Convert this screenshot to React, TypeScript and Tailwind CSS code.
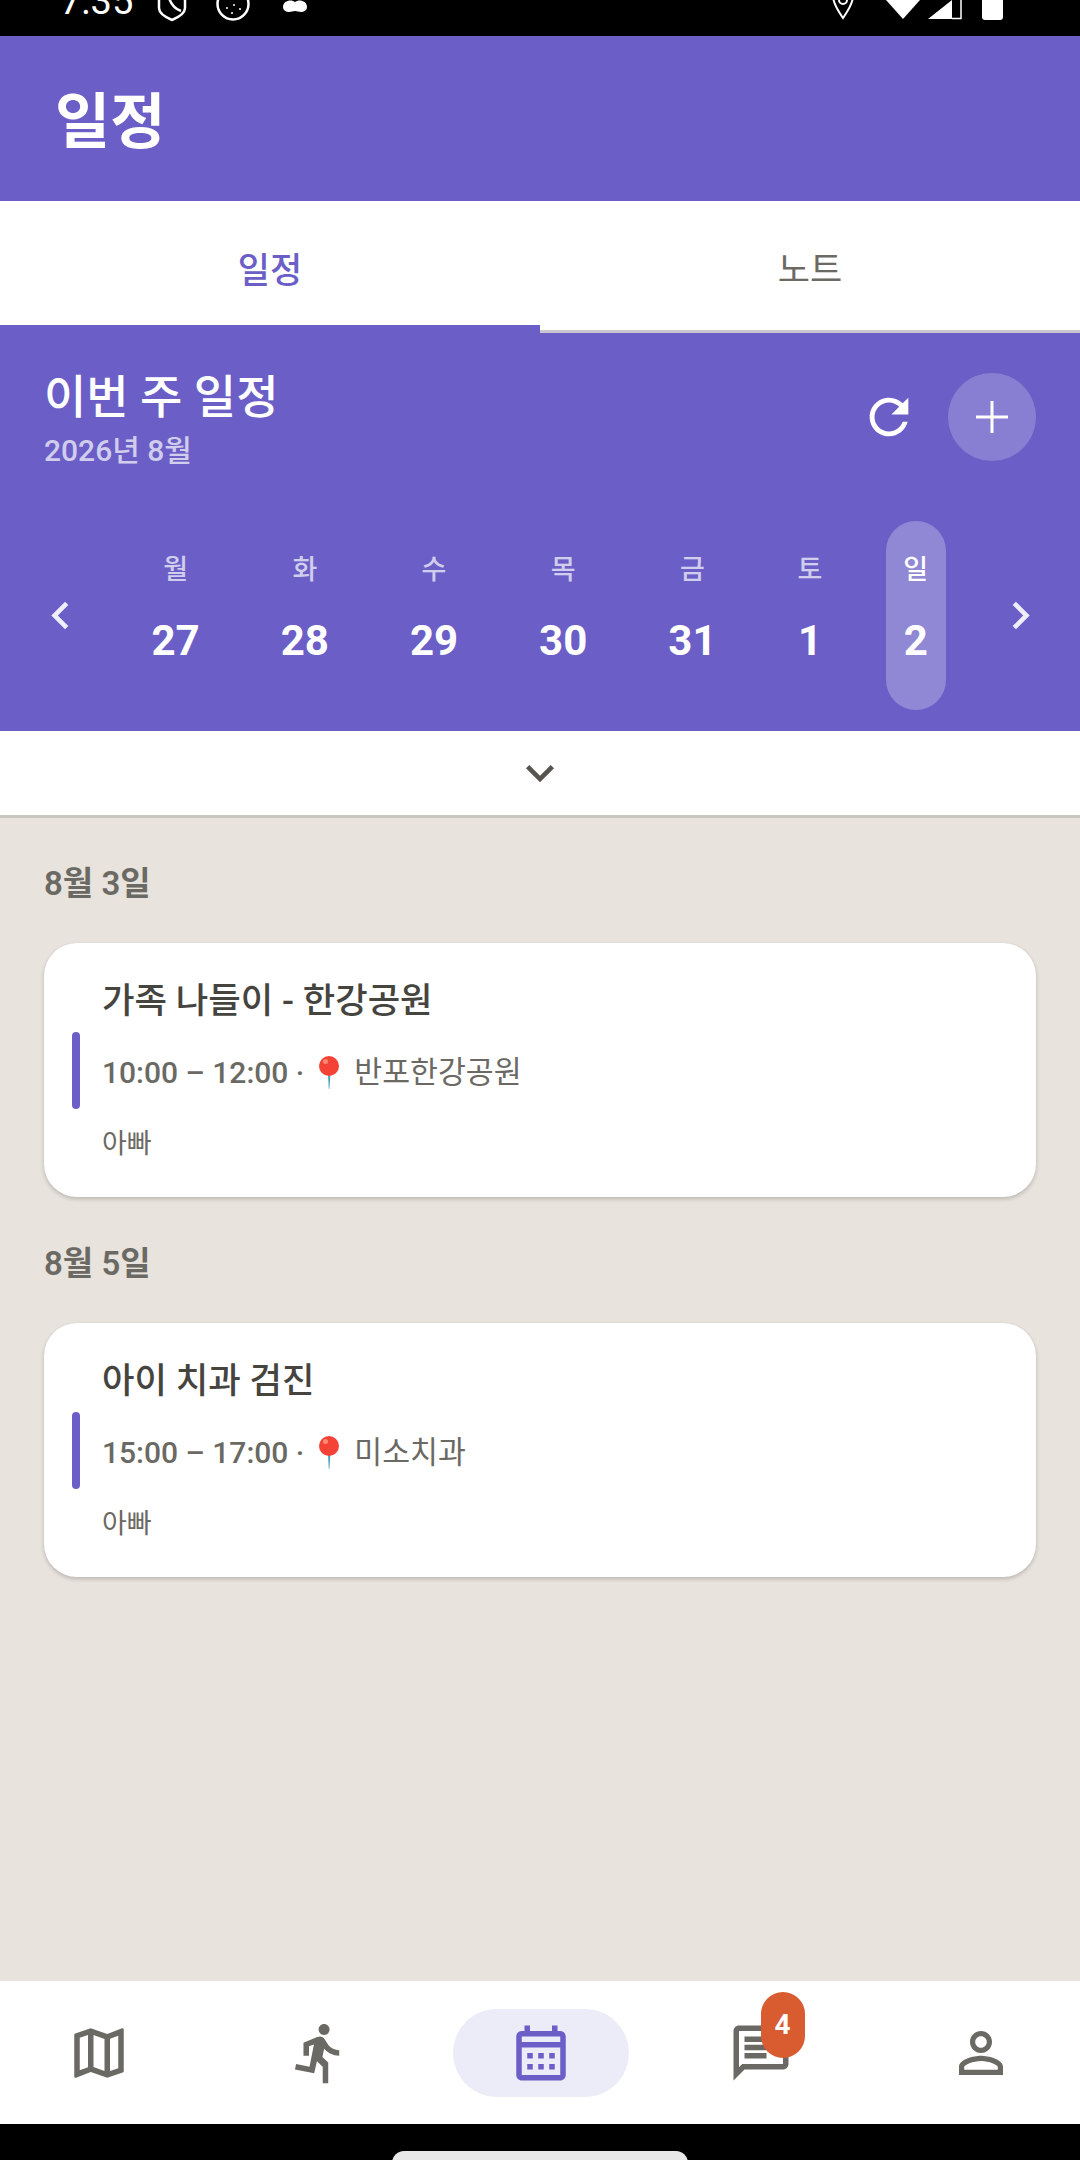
const fontStack = { fontFamily: '"Roboto", "Noto Sans CJK KR", sans-serif' };

const days = [
  { name: "월", num: "27" },
  { name: "화", num: "28" },
  { name: "수", num: "29" },
  { name: "목", num: "30" },
  { name: "금", num: "31" },
  { name: "토", num: "1" },
  { name: "일", num: "2", active: true },
];

const events = [
  { date: "8월 3일", title: "가족 나들이 - 한강공원", time: "10:00 – 12:00 ·", place: "반포한강공원", who: "아빠" },
  { date: "8월 5일", title: "아이 치과 검진", time: "15:00 – 17:00 ·", place: "미소치과", who: "아빠" },
];

function Icon({ d, className }: { d: string; className: string }) {
  return (
    <svg viewBox="0 0 24 24" fill="currentColor" className={className}>
      <path d={d} />
    </svg>
  );
}

const paths = {
  refresh:
    "M17.65 6.35C16.2 4.9 14.21 4 12 4c-4.42 0-7.99 3.58-7.99 8s3.57 8 7.99 8c3.73 0 6.84-2.55 7.73-6h-2.08c-.82 2.33-3.04 4-5.65 4-3.31 0-6-2.69-6-6s2.69-6 6-6c1.66 0 3.14.69 4.22 1.78L13 11h7V4l-2.35 2.35z",
  left: "M15.41 7.41L14 6l-6 6 6 6 1.41-1.41L10.83 12z",
  right: "M8.59 16.59L10 18l6-6-6-6-1.41 1.41L13.17 12z",
  down: "M16.59 8.59L12 13.17 7.41 8.59 6 10l6 6 6-6z",
  map: "M20.5 3l-.16.03L15 5.1 9 3 3.36 4.9c-.21.07-.36.25-.36.48V20.5c0 .28.22.5.5.5l.16-.03L9 18.9l6 2.1 5.64-1.9c.21-.07.36-.25.36-.48V3.5c0-.28-.22-.5-.5-.5zM10 5.47l4 1.4v11.66l-4-1.4V5.47zm-5 .99l3-1.01v11.7l-3 1.16V6.46zm14 11.08l-3 1.01V6.86l3-1.16v11.84z",
  run: "M13.49 5.48c1.1 0 2-.9 2-2s-.9-2-2-2-2 .9-2 2 .9 2 2 2zm-3.6 13.9l1-4.4 2.1 2v6h2v-7.5l-2.1-2 .6-3c1.3 1.5 3.3 2.5 5.5 2.5v-2c-1.9 0-3.5-1-4.3-2.4l-1-1.6c-.4-.6-1-1-1.7-1-.3 0-.5.1-.8.1l-5.2 2.2v4.7h2v-3.4l1.8-.7-1.6 8.1-4.9-1-.4 2 7 1.4z",
  calendar:
    "M19 4h-1V2h-2v2H8V2H6v2H5c-1.1 0-2 .9-2 2v14c0 1.1.9 2 2 2h14c1.1 0 2-.9 2-2V6c0-1.1-.9-2-2-2zm0 16H5V10h14v10zm0-12H5V6h14v2zM9 14H7v-2h2v2zm4 0h-2v-2h2v2zm4 0h-2v-2h2v2zm-8 4H7v-2h2v2zm4 0h-2v-2h2v2zm4 0h-2v-2h2v2z",
  chat: "M20 2H4c-1.1 0-2 .9-2 2v18l4-4h14c1.1 0 2-.9 2-2V4c0-1.1-.9-2-2-2zm0 14H5.17L4 17.17V4h16v12zM6 12h8v2H6zm0-3h12v2H6zm0-3h12v2H6z",
  person:
    "M12 5.9c1.16 0 2.1.94 2.1 2.1s-.94 2.1-2.1 2.1S9.9 9.16 9.9 8s.94-2.1 2.1-2.1m0 9c2.97 0 6.1 1.46 6.1 2.1v1.1H5.9V17c0-.64 3.13-2.1 6.1-2.1M12 4C9.79 4 8 5.79 8 8s1.79 4 4 4 4-1.79 4-4-1.79-4-4-4zm0 9c-2.67 0-8 1.34-8 4v3h16v-3c0-2.66-5.33-4-8-4z",
};

function StatusBar() {
  return (
    <div className="h-[36px] shrink-0 bg-black overflow-hidden flex items-start text-white pl-[60px] pr-[77px]">
      <span className="text-[38px] leading-[38px] -mt-[18px] w-[97px] font-normal">7:35</span>
      <svg width="30" height="22" viewBox="0 0 30 22" fill="none" stroke="white" strokeWidth="2.5">
        <path d="M2 -8V8c0 5 6 9 13 12 7-3 13-7 13-12V-8M12 -2c2 6 6 11 12 13" />
      </svg>
      <svg width="34" height="22" viewBox="0 0 34 22" className="ml-[29px]">
        <circle cx="17" cy="4" r="15.5" fill="none" stroke="white" strokeWidth="2.5" />
        <circle cx="11" cy="8" r="1" fill="white" />
        <circle cx="18" cy="5" r="1" fill="white" />
        <circle cx="24" cy="9" r="1" fill="white" />
        <circle cx="16" cy="13" r="1" fill="white" />
      </svg>
      <svg width="24" height="13" viewBox="0 0 24 13" fill="white" className="ml-[33px]">
        <path d="M12 2C15-1 24 0 24 7c0 4-4 5-6 5-2 0-4-1-6-1s-4 1-6 1c-2 0-6-1-6-5C0 0 9-1 12 2z" />
      </svg>
      <svg width="24" height="20" viewBox="0 0 24 20" fill="none" stroke="white" strokeWidth="2" className="ml-auto">
        <path d="M2 -4c0 8 6 16 10 22C16 12 22 4 22 -4M8 0a4 4 0 0 0 8 0" />
      </svg>
      <svg width="34" height="19" viewBox="0 0 34 19" fill="white" className="ml-[31px]">
        <path d="M0 0H34L17 19z" />
      </svg>
      <svg width="34" height="20" viewBox="0 0 34 20" className="ml-[8px]">
        <path d="M0 19L24 0V19z" fill="white" />
        <path d="M24 18.5H33V0" fill="none" stroke="white" strokeWidth="1.5" />
      </svg>
      <div className="w-[21px] h-[20px] ml-[20px] bg-white rounded-b-[3px]" />
    </div>
  );
}

function DayColumn({ name, num, active }: { name: string; num: string; active?: boolean }) {
  return (
    <div
      className={`mx-[23px] px-[17.5px] h-[189px] rounded-[30px] flex flex-col items-center pt-[31px] ${
        active ? "bg-white/25" : ""
      }`}
    >
      <span className={`text-[27px] leading-[36px] font-medium ${active ? "text-white" : "text-white/70"}`}>{name}</span>
      <span className="text-[42px] leading-[50px] font-bold text-white mt-[28px]">{num}</span>
    </div>
  );
}

function PinEmoji() {
  return (
    <svg width="22" height="33" viewBox="0 0 22 33" className="ml-[14px] mr-[14px] shrink-0">
      <path d="M10 18h2.4L11.4 33h-.6z" fill="#4a9fb5" />
      <circle cx="11" cy="10" r="10" fill="#f44336" />
      <circle cx="7.5" cy="5.5" r="2.5" fill="#ff8a75" />
    </svg>
  );
}

function EventCard({ title, time, place, who }: { title: string; time: string; place: string; who: string }) {
  return (
    <div className="mt-[35px] h-[254px] rounded-[33px] bg-white shadow-[0_2px_4px_rgba(0,0,0,0.2)] flex items-center pl-[28px]">
      <div className="w-[8px] h-[77px] rounded-full bg-[#6b5fc7] shrink-0" />
      <div className="ml-[22px] flex flex-col">
        <div className="text-[35.3px] leading-[50px] font-medium text-[#45443f] -mt-[3px]">{title}</div>
        <div className="mt-[22px] flex items-center h-[50px] text-[#6b6963]">
          <span className="text-[30px] font-medium">{time}</span>
          <PinEmoji />
          <span className="text-[30.3px]">{place}</span>
        </div>
        <div className="mt-[28px] text-[27px] leading-[36px] text-[#6b6963]">{who}</div>
      </div>
    </div>
  );
}

function BottomNav() {
  return (
    <div className="h-[143px] shrink-0 bg-white flex items-center justify-between px-[66px] text-[#6b6963]">
      <Icon d={paths.map} className="w-[66px] h-[66px]" />
      <Icon d={paths.run} className="w-[66px] h-[66px]" />
      <div className="w-[66px] flex justify-center">
        <div className="-mx-[55px] ml-[-54px] w-[176px] h-[88px] shrink-0 rounded-full bg-[#ecebf8] flex items-center justify-center text-[#6b5fc7]">
          <Icon d={paths.calendar} className="w-[66px] h-[66px]" />
        </div>
      </div>
      <div className="relative w-[66px] h-[66px]">
        <Icon d={paths.chat} className="w-[66px] h-[66px]" />
        <div className="absolute left-[33px] -top-[28px] w-[44px] h-[66px] rounded-full bg-[#d95b30] text-white text-[28px] font-bold flex items-center justify-center">
          4
        </div>
      </div>
      <Icon d={paths.person} className="w-[66px] h-[66px]" />
    </div>
  );
}

export default function App() {
  return (
    <div className="w-[1080px] h-[2160px] flex flex-col bg-[#e8e3dc] overflow-hidden" style={fontStack}>
      <StatusBar />

      <div className="h-[165px] shrink-0 bg-[#6b5fc7] flex items-center pl-[55px] pt-[8px] text-[60px] font-bold text-white">일정</div>

      <div className="h-[132px] shrink-0 flex bg-white">
        <div className="flex-1 border-b-[8px] border-[#6b5fc7] flex items-center justify-center text-[35px] font-medium text-[#6b5fc7] pt-[18px]">
          일정
        </div>
        <div className="flex-1 border-b-[3px] border-[#c9c6cf] flex items-center justify-center text-[35px] text-[#6b6963] pt-[12px]">
          노트
        </div>
      </div>

      <div className="h-[398px] shrink-0 bg-[#6b5fc7] flex flex-col">
        <div className="flex items-start justify-between pl-[44px] pr-[44px] pt-[40px]">
          <div className="flex flex-col">
            <div className="text-[46px] leading-[60px] font-medium text-white -mt-[6px]">이번 주 일정</div>
            <div className="text-[30px] leading-[40px] font-medium text-white/70 mt-[4px]">2026년 8월</div>
          </div>
          <div className="flex items-center">
            <Icon d={paths.refresh} className="w-[58px] h-[58px] text-white" />
            <div className="ml-[30px] w-[88px] h-[88px] rounded-full bg-white/20 flex items-center justify-center">
              <svg width="32" height="32" viewBox="0 0 32 32" stroke="white" strokeWidth="3">
                <path d="M16 0V32M0 16H32" />
              </svg>
            </div>
          </div>
        </div>
        <div className="flex items-center mt-[50px] pl-[33px]">
          <Icon d={paths.left} className="w-[55px] h-[55px] text-white/90" />
          <div className="flex ml-[23px]">
            {days.map((d) => (
              <DayColumn key={d.name} name={d.name} num={d.num} active={d.active} />
            ))}
          </div>
          <Icon d={paths.right} className="w-[55px] h-[55px] text-white/90 ml-[24px]" />
        </div>
      </div>

      <div className="h-[87px] shrink-0 bg-white border-b-[3px] border-[#c9c5bf] flex items-center justify-center text-[#57544f]">
        <Icon d={paths.down} className="w-[56px] h-[56px]" />
      </div>

      <div className="flex-1 px-[44px] pt-[42px]">
        {events.map((e) => (
          <div key={e.date} className="mb-[43px]">
            <div className="text-[33px] leading-[48px] font-semibold text-[#6b6963]">{e.date}</div>
            <EventCard title={e.title} time={e.time} place={e.place} who={e.who} />
          </div>
        ))}
      </div>

      <BottomNav />

      <div className="h-[36px] shrink-0 bg-black flex justify-center pt-[27px]">
        <div className="w-[296px] h-[12px] rounded-t-full bg-[#e8e8e8]" />
      </div>
    </div>
  );
}
